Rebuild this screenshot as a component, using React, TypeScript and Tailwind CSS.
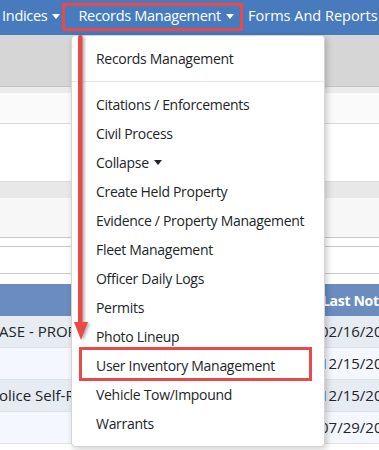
const menuItems = [
  'Citations / Enforcements',
  'Civil Process',
  'Collapse',
  'Create Held Property',
  'Evidence / Property Management',
  'Fleet Management',
  'Officer Daily Logs',
  'Permits',
  'Photo Lineup',
  'User Inventory Management',
  'Vehicle Tow/Impound',
  'Warrants',
];

const rows = [
  { left: 'ASE - PROPERTY RELEASE', date: '02/16/2023', bg: 'bg-[#e7ebf2]' },
  { left: '', date: '12/15/2022', bg: 'bg-[#f4f7fd]' },
  { left: 'olice Self-Report', date: '12/15/2022', bg: 'bg-[#e7ebf2]' },
  { left: '', date: '07/29/2022', bg: 'bg-[#f4f7fd]' },
];

function Caret() {
  return <span className="inline-block ml-[5px] border-x-[4px] border-t-[5px] border-x-transparent border-t-current align-middle" />;
}

export default function App() {
  return (
    <div className="relative w-[379px] h-[450px] overflow-hidden bg-white font-['Open_Sans',sans-serif] text-[#212529]">
      {/* nav bar */}
      <nav className="h-[35px] bg-[#477bbe] flex items-center pb-[3px] text-white text-[14.5px] tracking-[-0.3px] whitespace-nowrap">
        <div className="flex items-center -ml-[7px] pr-[18px]">
          <span>r Indices</span>
          <Caret />
        </div>
        <div className="flex items-center pr-[14px]">
          <span>Records Management</span>
          <Caret />
        </div>
        <div className="flex items-center tracking-[0px]">
          <span>Forms And Reports</span>
          <Caret />
        </div>
      </nav>

      {/* page behind the menu */}
      <div className="h-[52px] bg-[#d6d6d6] border-b border-[#c4c4c4]" />
      <div className="h-[6px] bg-[#ebebeb]" />
      <div className="h-[31px] bg-[#fafafa] border-b border-[#d9d9d9]" />
      <div className="h-[57px] bg-white" />
      <div className="h-[17px] bg-[#e8e8e8] border-t border-[#dcdcdc]" />
      <div className="h-[40px] bg-[#f7f7f7] border-b border-[#c8c8c8]" />
      <div className="h-[9px] bg-white border-b border-[#c8c8c8]" />
      <div className="h-[27px] bg-white border-b border-[#c8c8c8]" />
      <div className="h-[10px] bg-white" />

      <div className="h-[32px] bg-[#6a8cbf] grid grid-cols-[312px_1fr] items-center text-white font-bold text-[14px] tracking-[-0.3px]">
        <div />
        <div className="pl-[10px] whitespace-nowrap">Last Notice</div>
      </div>
      {rows.map((r, i) => (
        <div key={i} className={`h-[32px] ${r.bg} border-b border-[#dde2ea] grid grid-cols-[312px_1fr] items-center text-[15px] whitespace-nowrap overflow-hidden`}>
          <div className="overflow-hidden -ml-[1px]">{r.left}</div>
          <div className="pl-[8px]">{r.date}</div>
        </div>
      ))}

      {/* dropdown menu */}
      <div className="absolute left-[71px] top-[35px] w-[254px] bg-white border border-[#d4d4d4] rounded-[4px] shadow-[2px_2px_6px_rgba(0,0,0,0.2)] py-[8px] text-[14px] tracking-[-0.3px]">
        <div className="px-[24px] h-[29px] flex items-center">Records Management</div>
        <div className="my-[8px] border-t border-[#e6e6e6]" />
        {menuItems.map((item) => (
          <div key={item} className="px-[24px] h-[29px] flex items-center whitespace-nowrap">
            {item}
            {item === 'Collapse' && <Caret />}
          </div>
        ))}
      </div>

      {/* annotations */}
      <div className="absolute left-[62px] top-[3px] w-[181px] h-[28px] border-[3px] border-[#e84a4a]" />
      <div className="absolute left-[79px] top-[347px] w-[233px] h-[34px] border-[3px] border-[#e84a4a]" />
      <svg className="absolute left-[70px] top-[33px]" width="24" height="312" viewBox="0 0 24 312" style={{ filter: 'drop-shadow(2px 1px 1.5px rgba(0,0,0,0.3))' }}>
        <rect x="8" y="2" width="4.5" height="290" rx="2" fill="#e84a4a" />
        <polygon points="4,289 18,289 11,307" fill="#e84a4a" />
      </svg>
    </div>
  );
}
